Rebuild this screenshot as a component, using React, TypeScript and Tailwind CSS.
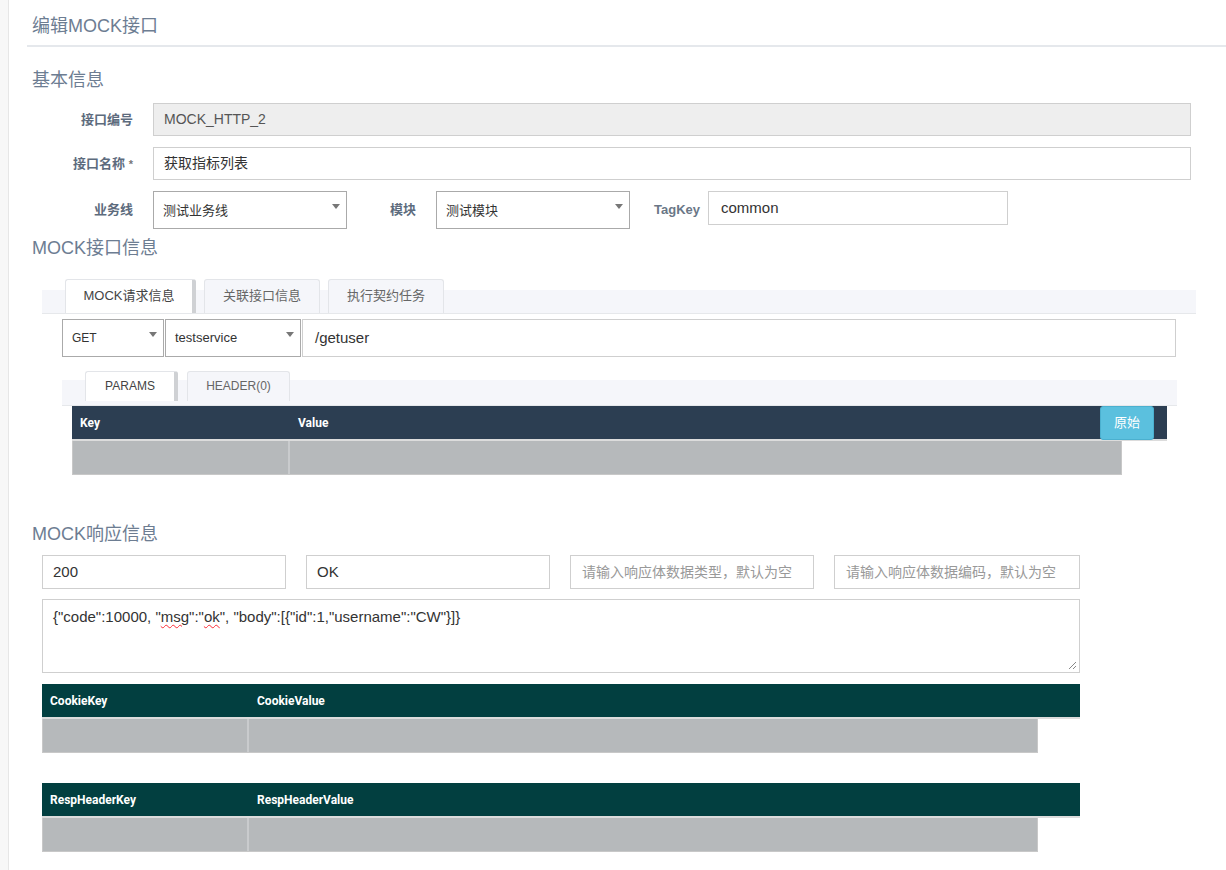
import React from "react";

const font = { fontFamily: '"Liberation Sans", "Noto Sans CJK SC", sans-serif' };

function Caret() {
  return (
    <svg width="8" height="5" viewBox="0 0 8 5" className="absolute right-[6px] top-[12px]">
      <path d="M0 0 H8 L4 5 Z" fill="#777" />
    </svg>
  );
}

function Select({ value, className, text = "text-[13px]" }: { value: string; className: string; text?: string }) {
  return (
    <div className={`relative flex items-center border border-[#aaa] bg-white pl-[9px] text-[#333] ${text} ${className}`}>
      {value}
      <Caret />
    </div>
  );
}

function Label({ children, className = "" }: { children: React.ReactNode; className?: string }) {
  return <div className={`text-right text-[13px] font-bold text-[#5d6b7d] ${className}`}>{children}</div>;
}

function Tab({ label, active, className = "" }: { label: string; active?: boolean; className?: string }) {
  return (
    <div
      className={`flex items-center justify-center rounded-t-[3px] border border-b-0 pb-[2px] ${
        active ? "border-[#e3e5e9] border-r-[4px] border-r-[#cfd1d4] bg-white text-[#444]" : "border-[#e3e5e9] bg-[#f5f6fa] text-[#666]"
      } ${className}`}
    >
      {label}
    </div>
  );
}

function GrayTable({ k, v, bg, width, rowWidth, keyW, btn }: { k: string; v: string; bg: string; width: string; rowWidth: string; keyW: string; btn?: boolean }) {
  return (
    <div className={width} style={{ fontFamily: 'Roboto, "Noto Sans CJK SC", sans-serif' }}>
      <div className={`flex h-[35px] items-center border-b-2 border-[#dcdcdc] text-[12px] font-bold text-white ${bg}`}>
        <div className={`pl-[8px] ${keyW}`}>{k}</div>
        <div className="flex-1 pl-[8px]">{v}</div>
        {btn && (
          <div className="mr-[13px] flex h-[34px] w-[54px] items-center justify-center self-start rounded-[3px] border border-[#4bb0cf] bg-[#5bc0de] text-[13px] font-normal text-white" style={font}>
            原始
          </div>
        )}
      </div>
      <div className={`flex h-[34px] border border-t-0 border-[#c8c8c8] bg-[#b6b9bb] ${rowWidth}`}>
        <div className={`${keyW} -ml-px border-r-2 border-[#c9cbcd]`} />
        <div className="flex-1" />
      </div>
    </div>
  );
}

export default function App() {
  return (
    <div className="flex min-h-[870px] w-full bg-white" style={font}>
      <div className="w-[9px] shrink-0 border-r border-[#e6e6e6] bg-[#f7f7f7]" />
      <div className="flex-1 pl-[18px]">
        <div className="flex h-[47px] items-center border-b-2 border-[#e5e8ec] pl-[5px] pt-[7px] text-[18px] text-[#6d7d92]">编辑MOCK接口</div>

        <div className="mt-[21px] h-[24px] pl-[5px] text-[18px] leading-[24px] text-[#6d7d92]">基本信息</div>

        <div className="mt-[11px] flex items-center">
          <Label className="w-[106px]">接口编号</Label>
          <div className="ml-[20px] flex h-[33px] w-[1038px] items-center border border-[#cfcfcf] bg-[#eeeeee] pl-[10px] text-[14px] text-[#555]">MOCK_HTTP_2</div>
        </div>
        <div className="mt-[11px] flex items-center">
          <Label className="w-[106px]">
            接口名称 <span className="text-[11px] text-[#777]">*</span>
          </Label>
          <div className="ml-[20px] flex h-[33px] w-[1038px] items-center border border-[#cfcfcf] bg-white pl-[10px] text-[14px] text-[#333]">获取指标列表</div>
        </div>
        <div className="mt-[11px] flex items-center">
          <Label className="w-[106px]">业务线</Label>
          <Select value="测试业务线" className="ml-[20px] h-[38px] w-[194px] pt-[2px]" />
          <Label className="w-[69px]">模块</Label>
          <Select value="测试模块" className="ml-[20px] h-[38px] w-[194px] pt-[2px]" />
          <Label className="w-[70px] text-[#6a7787]">TagKey</Label>
          <div className="ml-[8px] flex h-[34px] w-[300px] items-center self-start border border-[#cfcfcf] pl-[12px] text-[15px] text-[#333]">common</div>
        </div>

        <div className="mt-[7px] h-[24px] pl-[5px] text-[18px] leading-[24px] text-[#6d7d92]">MOCK接口信息</div>

        <div className="ml-[15px] mt-[20px] w-[1154px]">
          <div className="relative flex h-[34px] items-end gap-[8px] border-b border-[#e6e8eb] pl-[23px]">
            <div className="absolute inset-x-0 bottom-0 top-[10px] bg-[#f5f6fa]" />
            <Tab label="MOCK请求信息" active className="relative h-[34px] w-[131px] text-[13px]" />
            <Tab label="关联接口信息" className="relative h-[34px] w-[116px] text-[13px]" />
            <Tab label="执行契约任务" className="relative h-[34px] w-[116px] text-[13px]" />
          </div>
        </div>

        <div className="ml-[35px] mt-[5px] flex h-[38px] items-stretch gap-[1px]">
          <Select value="GET" text="text-[12px]" className="h-[38px] w-[102px]" />
          <Select value="testservice" className="h-[38px] w-[136px]" />
          <div className="flex h-[38px] w-[874px] items-center border border-[#cfcfcf] pl-[12px] text-[15px] text-[#333]">/getuser</div>
        </div>

        <div className="ml-[35px] mt-[14px] w-[1115px]">
          <div className="relative flex h-[35px] items-start gap-[9px] pl-[23px]">
            <div className="absolute inset-x-0 bottom-0 top-[9px] border-b border-[#e6e8eb] bg-[#f5f6fa]" />
            <Tab label="PARAMS" active className="relative h-[30px] w-[93px] text-[12px]" />
            <Tab label="HEADER(0)" className="relative h-[30px] w-[103px] text-[12px]" />
          </div>
        </div>

        <div className="ml-[45px]">
          <GrayTable k="Key" v="Value" bg="bg-[#2c3e52]" width="w-[1095px]" rowWidth="w-[1050px]" keyW="w-[218px]" btn />
        </div>

        <div className="mt-[47px] h-[24px] pl-[5px] text-[18px] leading-[24px] text-[#6d7d92]">MOCK响应信息</div>

        <div className="ml-[15px] mt-[9px] flex gap-[20px]">
          <div className="flex h-[34px] w-[244px] items-center border border-[#cfcfcf] pl-[10px] text-[15px] text-[#333]">200</div>
          <div className="flex h-[34px] w-[244px] items-center border border-[#cfcfcf] pl-[10px] text-[15px] text-[#333]">OK</div>
          <div className="flex h-[34px] w-[244px] items-center border border-[#cfcfcf] pl-[11px] text-[14px] text-[#999]">请输入响应体数据类型，默认为空</div>
          <div className="flex h-[34px] w-[246px] items-center border border-[#cfcfcf] pl-[11px] text-[14px] text-[#999]">请输入响应体数据编码，默认为空</div>
        </div>

        <div className="relative ml-[15px] mt-[10px] h-[74px] w-[1038px] border border-[#cfcfcf] px-[10px] pt-[6px] text-[15px] text-[#333]">
          {'{"code":10000, "'}
          <span className="underline decoration-red-500 decoration-wavy decoration-1 underline-offset-2">msg</span>
          {'":"'}
          <span className="underline decoration-red-500 decoration-wavy decoration-1 underline-offset-2">ok</span>
          {'", "body":[{"id":1,"username":"CW"}]}'}
          <svg width="9" height="9" viewBox="0 0 9 9" className="absolute bottom-[2px] right-[2px]">
            <path d="M8 1 L1 8 M8 5 L5 8" stroke="#888" strokeWidth="1" />
          </svg>
        </div>

        <div className="ml-[15px] mt-[11px]">
          <GrayTable k="CookieKey" v="CookieValue" bg="bg-[#023f40]" width="w-[1038px]" rowWidth="w-[996px]" keyW="w-[207px]" />
        </div>
        <div className="ml-[15px] mt-[30px]">
          <GrayTable k="RespHeaderKey" v="RespHeaderValue" bg="bg-[#023f40]" width="w-[1038px]" rowWidth="w-[996px]" keyW="w-[207px]" />
        </div>
      </div>
    </div>
  );
}
